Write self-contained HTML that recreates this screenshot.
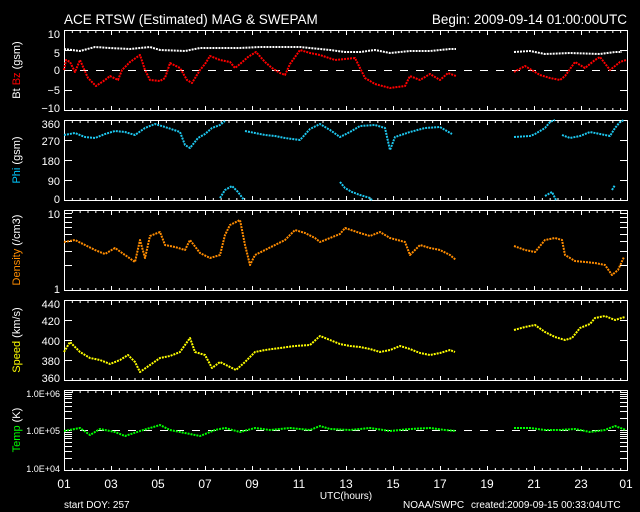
<!DOCTYPE html>
<html><head><meta charset="utf-8"><style>
html,body{margin:0;padding:0;background:#000;}
svg{display:block}
text{font-family:"Liberation Sans",sans-serif;font-size:11px;fill:#fff}
</style></head><body>
<svg width="640" height="512" viewBox="0 0 640 512" xmlns="http://www.w3.org/2000/svg">
<defs>
<pattern id="tk" x="64" y="0" width="7.8333" height="512" patternUnits="userSpaceOnUse"><rect x="0" y="0" width="1" height="512" fill="#fff"/></pattern>
<pattern id="tk2" x="64" y="0" width="47" height="512" patternUnits="userSpaceOnUse"><rect x="0" y="0" width="1" height="512" fill="#fff"/></pattern>
</defs>
<rect width="640" height="512" fill="#000"/>
<text x="64" y="24" style="font-size:13.5px">ACE RTSW (Estimated) MAG &amp; SWEPAM</text>
<text x="627" y="24" text-anchor="end" style="font-size:13.5px">Begin: 2009-09-14 01:00:00UTC</text>

<g fill="none" stroke="#fff" stroke-width="1">
<rect x="64.5" y="30.5" width="563" height="80"/>
<rect x="64.5" y="120.5" width="563" height="80"/>
<rect x="64.5" y="210.5" width="563" height="80"/>
<rect x="64.5" y="300.5" width="563" height="80"/>
<rect x="64.5" y="390.5" width="563" height="80"/>
</g>
<g fill="url(#tk)">
<rect x="64" y="31" width="564" height="2"/><rect x="64" y="108" width="564" height="2"/>
<rect x="64" y="121" width="564" height="2"/><rect x="64" y="198" width="564" height="2"/>
<rect x="64" y="211" width="564" height="2"/><rect x="64" y="288" width="564" height="2"/>
<rect x="64" y="301" width="564" height="2"/><rect x="64" y="378" width="564" height="2"/>
<rect x="64" y="391" width="564" height="2"/><rect x="64" y="468" width="564" height="2"/>
</g>
<g fill="url(#tk2)">
<rect x="64" y="31" width="564" height="4"/><rect x="64" y="106" width="564" height="4"/>
<rect x="64" y="121" width="564" height="4"/><rect x="64" y="196" width="564" height="4"/>
<rect x="64" y="211" width="564" height="4"/><rect x="64" y="286" width="564" height="4"/>
<rect x="64" y="301" width="564" height="4"/><rect x="64" y="376" width="564" height="4"/>
<rect x="64" y="391" width="564" height="4"/><rect x="64" y="466" width="564" height="4"/>
</g>
<g stroke="#fff" stroke-width="1">
<path d="M64 50.5h8M64 70.5h8M64 90.5h8M620 50.5h8M620 70.5h8M620 90.5h8"/>
<path d="M64 140.5h8M64 160.5h8M64 180.5h8M620 140.5h8M620 160.5h8M620 180.5h8"/>
<path d="M64 265.5h8M64 251.5h8M64 241.5h8M64 234.5h8M64 227.5h8M64 222.5h8M64 217.5h8M64 213.5h8M620 265.5h8M620 251.5h8M620 241.5h8M620 234.5h8M620 227.5h8M620 222.5h8M620 217.5h8M620 213.5h8"/>
<path d="M64 320.5h8M64 340.5h8M64 360.5h8M620 320.5h8M620 340.5h8M620 360.5h8"/>
<path d="M64 458.5h8M64 451.5h8M64 446.5h8M64 442.5h8M64 438.5h8M64 436.5h8M64 434.5h8M64 432.5h8M64 430.5h8M64 418.5h8M64 411.5h8M64 406.5h8M64 402.5h8M64 398.5h8M64 396.5h8M64 394.5h8M64 392.5h8M620 458.5h8M620 451.5h8M620 446.5h8M620 442.5h8M620 438.5h8M620 436.5h8M620 434.5h8M620 432.5h8M620 430.5h8M620 418.5h8M620 411.5h8M620 406.5h8M620 402.5h8M620 398.5h8M620 396.5h8M620 394.5h8M620 392.5h8"/>
<path d="M64 70.5H627M64 430.5H627" stroke-dasharray="8 8"/>
</g>

<g text-anchor="end">
<text x="60" y="38">10</text><text x="60" y="57">5</text><text x="60" y="74">0</text><text x="60" y="94">−5</text><text x="60" y="112">−10</text>
<text x="60" y="128">360</text><text x="60" y="145">270</text><text x="60" y="165">180</text><text x="60" y="185">90</text><text x="60" y="203">0</text>
<text x="60" y="218">10</text><text x="60" y="293">1</text>
<text x="60" y="308">440</text><text x="60" y="325">420</text><text x="60" y="345">400</text><text x="60" y="365">380</text><text x="60" y="382">360</text>
<text x="60" y="397" style="font-size:9px">1.0E+06</text><text x="60" y="434" style="font-size:9px">1.0E+05</text><text x="60" y="472" style="font-size:9px">1.0E+04</text>
</g>

<text transform="translate(20,70) rotate(-90)" text-anchor="middle">Bt <tspan fill="#f00">Bz</tspan> (gsm)</text>
<text transform="translate(20,160) rotate(-90)" text-anchor="middle"><tspan fill="#00c8ff">Phi</tspan> (gsm)</text>
<text transform="translate(20,250) rotate(-90)" text-anchor="middle"><tspan fill="#ff8c00">Density</tspan> (/cm3)</text>
<text transform="translate(20,340) rotate(-90)" text-anchor="middle"><tspan fill="#ffff00">Speed</tspan> (km/s)</text>
<text transform="translate(20,430) rotate(-90)" text-anchor="middle"><tspan fill="#00ff00">Temp</tspan> (K)</text>

<g text-anchor="middle">
<text x="64" y="488" style="font-size:12px">01</text><text x="111" y="488" style="font-size:12px">03</text><text x="158" y="488" style="font-size:12px">05</text><text x="205" y="488" style="font-size:12px">07</text><text x="252" y="488" style="font-size:12px">09</text><text x="299" y="488" style="font-size:12px">11</text><text x="346" y="488" style="font-size:12px">13</text><text x="393" y="488" style="font-size:12px">15</text><text x="440" y="488" style="font-size:12px">17</text><text x="487" y="488" style="font-size:12px">19</text><text x="534" y="488" style="font-size:12px">21</text><text x="581" y="488" style="font-size:12px">23</text><text x="626" y="488" style="font-size:12px">01</text>
</g>
<text x="346" y="499" text-anchor="middle" style="font-size:10px">UTC(hours)</text>
<text x="64" y="508" style="font-size:10px">start DOY: 257</text>
<text x="403" y="508" style="font-size:10px">NOAA/SWPC</text>
<text x="471" y="508" style="font-size:10px">created:2009-09-15 00:33:04UTC</text>

<g fill="none" stroke-width="2" stroke-linejoin="round" stroke-dasharray="2 1">
<polyline stroke="#fff" points="64,49 80,51 95,47 110,48 130,49 150,47 160,50 185,51 200,48 215,48 240,48 260,47 280,47 300,47 320,49 330,50 345,52 360,52 375,50 390,53 410,51 430,51 450,49 456,49"/>
<polyline stroke="#fff" points="514,52 530,51 545,54 570,53 600,54 615,52 622,52"/>
<polyline stroke="#f00" points="64,70 66,60 70,62 75,72 80,60 88,78 96,86 105,80 110,76 118,80 122,70 130,62 140,55 145,70 150,80 160,81 165,78 170,63 180,68 187,80 192,83 200,70 205,64 210,56 220,60 230,62 235,68 240,64 248,57 256,52 265,62 272,68 280,73 285,75 290,64 300,50 310,53 320,55 335,60 355,58 365,78 375,84 390,88 405,86 410,76 420,80 430,74 440,80 448,73 456,76"/>
<polyline stroke="#f00" points="514,72 525,66 535,72 540,75 550,78 560,80 565,76 575,62 585,68 595,60 600,57 610,70 620,62 626,60"/>
<polyline stroke="#1ec8f0" points="64,135 75,133 85,137 95,138 105,134 115,131 125,132 135,135 145,128 155,124 165,127 180,132 185,145 190,148 198,138 205,134 212,128 220,125 225,121"/>
<polyline stroke="#1ec8f0" points="220,198 225,190 232,186 238,192 244,200"/>
<polyline stroke="#1ec8f0" points="245,131 255,133 265,135 275,136 285,138 300,140 310,129 320,124 330,130 340,137 350,132 360,126 375,125 385,128 390,150 395,137 410,132 425,128 440,127 452,134"/>
<polyline stroke="#1ec8f0" points="340,182 345,188 352,192 360,195 370,198 372,200"/>
<polyline stroke="#1ec8f0" points="514,137 530,136 535,134 540,131 545,128 550,122 555,120"/>
<polyline stroke="#1ec8f0" points="562,135 570,138 580,136 590,132 600,134 610,136 615,128 620,122 624,120"/>
<polyline stroke="#1ec8f0" points="545,196 552,192 556,200"/>
<polyline stroke="#1ec8f0" points="612,190 615,185"/>
<polyline stroke="#ff8c00" points="64,242 75,240 85,245 95,250 105,254 115,248 125,255 135,262 140,240 145,258 150,236 160,232 165,245 175,247 185,250 190,240 200,253 210,258 220,255 225,235 230,225 240,220 245,245 250,265 255,255 265,250 275,245 285,240 295,230 305,233 315,238 320,242 330,238 340,234 345,228 360,233 370,236 380,232 390,238 405,242 410,255 420,245 430,248 440,250 450,255 456,260"/>
<polyline stroke="#ff8c00" points="514,246 525,250 535,252 545,240 555,238 562,240 565,255 575,261 585,262 595,263 605,265 612,275 618,270 624,257"/>
<polyline stroke="#ffff00" points="64,352 70,342 80,352 90,358 100,360 110,364 120,360 128,355 135,362 140,372 150,365 160,358 170,356 180,352 185,345 190,338 195,352 205,355 212,368 220,362 228,366 236,370 245,362 255,352 265,350 280,348 295,346 310,345 320,336 330,340 340,344 350,346 360,347 370,349 380,352 390,350 400,346 410,349 420,353 430,355 440,353 450,350 455,352"/>
<polyline stroke="#ffff00" points="514,330 525,327 535,325 545,332 555,337 565,340 572,338 580,328 590,324 595,318 605,316 615,320 625,317"/>
<polyline stroke="#00ff00" points="64,431 80,428 90,435 100,429 115,432 125,436 140,431 150,428 160,425 170,430 185,433 200,436 215,430 225,428 240,432 255,428 270,430 290,428 310,430 320,426 330,429 350,430 370,428 390,431 410,429 430,428 445,430 456,431"/>
<polyline stroke="#00ff00" points="514,428 530,428 545,430 560,430 575,429 590,432 605,430 615,426 626,430"/>
</g>
</svg>
</body></html>
